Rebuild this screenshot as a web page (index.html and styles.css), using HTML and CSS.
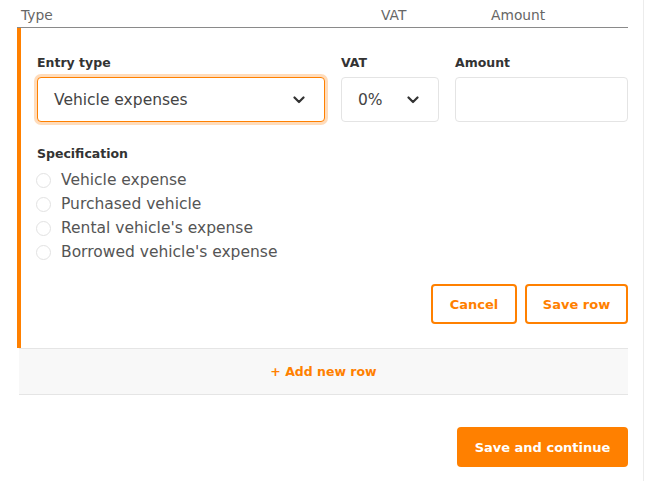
FILE: index.html
```html
<!DOCTYPE html>
<html lang="en">
<head>
<meta charset="utf-8">
<title>Entries</title>
<link rel="stylesheet" href="styles.css">
</head>
<body>
<div class="page">
  <div class="content">
    <div class="table-head">
      <span>Type</span>
      <span>VAT</span>
      <span>Amount</span>
    </div>
    <div class="card">
      <div class="form-grid">
        <div class="field">
          <label class="label">Entry type</label>
          <div class="select select-focus">
            <span>Vehicle expenses</span>
            <svg class="chev" width="12" height="8" viewBox="0 0 12 8"><polyline points="1.5,1.5 6,6 10.5,1.5" fill="none" stroke="#333" stroke-width="2.2" stroke-linecap="round" stroke-linejoin="round"/></svg>
          </div>
        </div>
        <div class="field">
          <label class="label">VAT</label>
          <div class="select">
            <span>0%</span>
            <svg class="chev" width="12" height="8" viewBox="0 0 12 8"><polyline points="1.5,1.5 6,6 10.5,1.5" fill="none" stroke="#333" stroke-width="2.2" stroke-linecap="round" stroke-linejoin="round"/></svg>
          </div>
        </div>
        <div class="field">
          <label class="label">Amount</label>
          <div class="input"></div>
        </div>
      </div>
      <div class="spec">
        <div class="label">Specification</div>
        <ul class="radios">
          <li><span class="radio"></span>Vehicle expense</li>
          <li><span class="radio"></span>Purchased vehicle</li>
          <li><span class="radio"></span>Rental vehicle's expense</li>
          <li><span class="radio"></span>Borrowed vehicle's expense</li>
        </ul>
      </div>
      <div class="actions">
        <button class="btn-outline cancel">Cancel</button>
        <button class="btn-outline save">Save row</button>
      </div>
    </div>
    <div class="add-row">+ Add new row</div>
    <div class="footer">
      <button class="btn-primary">Save and continue</button>
    </div>
  </div>
</div>
</body>
</html>
```
FILE: styles.css
```css
* { box-sizing: border-box; }
html, body { margin: 0; padding: 0; background: #fff; }
body {
  font-family: "DejaVu Sans", Verdana, sans-serif;
  color: #333;
}
.page {
  width: 644px;
  min-height: 481px;
  border-right: 1px solid #ececec;
}
.content {
  margin-left: 17px;
  width: 611px;
}
.table-head {
  display: grid;
  grid-template-columns: 360px 110px 1fr;
  padding: 6px 0 3px 4px;
  font-size: 13.8px;
  line-height: 18px;
  color: #666;
  border-bottom: 1px solid #8a8a8a;
}
.card {
  border-left: 4px solid #ff8000;
  padding: 25px 0 24px 16px;
}
.form-grid {
  display: grid;
  grid-template-columns: 288px 98px 1fr;
  column-gap: 16px;
}
.field { display: flex; flex-direction: column; }
.label {
  font-size: 12.5px;
  font-weight: bold;
  line-height: 20px;
  color: #333;
  margin-bottom: 4px;
}
.select, .input {
  height: 45px;
  border: 1px solid #e4e4e4;
  border-radius: 4px;
  background: #fff;
}
.select {
  display: flex;
  align-items: center;
  justify-content: space-between;
  padding: 0 19px 0 16px;
  font-size: 15.5px;
  color: #444;
}
.select-focus {
  border-color: #ff8000;
  box-shadow: 0 0 0 3px rgba(255, 140, 30, 0.3);
}
.chev { display: block; }
.spec { margin-top: 22px; }
.spec .label { margin-bottom: 4px; }
.radios {
  list-style: none;
  margin: 0;
  padding: 0;
}
.radios li {
  display: flex;
  align-items: center;
  height: 24px;
  font-size: 15.5px;
  color: #555;
}
.radio {
  width: 15px;
  height: 15px;
  border: 1.5px solid #e2e2e2;
  border-radius: 50%;
  margin: 0 10px 0 -1px;
  flex: none;
}
.actions {
  display: flex;
  justify-content: flex-end;
  gap: 8px;
  margin-top: 20px;
}
button {
  font-family: inherit;
  cursor: pointer;
}
.btn-outline {
  height: 40px;
  border: 2px solid #ff8000;
  border-radius: 4px;
  background: #fff;
  color: #ff8000;
  font-size: 13px;
  font-weight: bold;
  padding: 0;
}
.cancel { width: 86px; }
.save { width: 103px; }
.add-row {
  margin-left: 2px;
  height: 47px;
  background: #f8f8f8;
  border-top: 1px solid #e5e5e5;
  border-bottom: 1px solid #e5e5e5;
  display: flex;
  align-items: center;
  justify-content: center;
  color: #ff8000;
  font-size: 12.5px;
  font-weight: bold;
}
.footer {
  display: flex;
  justify-content: flex-end;
  margin-top: 32px;
}
.btn-primary {
  width: 171px;
  height: 40px;
  border: none;
  border-radius: 4px;
  background: #ff8000;
  color: #fff;
  font-size: 13px;
  font-weight: bold;
}
```
